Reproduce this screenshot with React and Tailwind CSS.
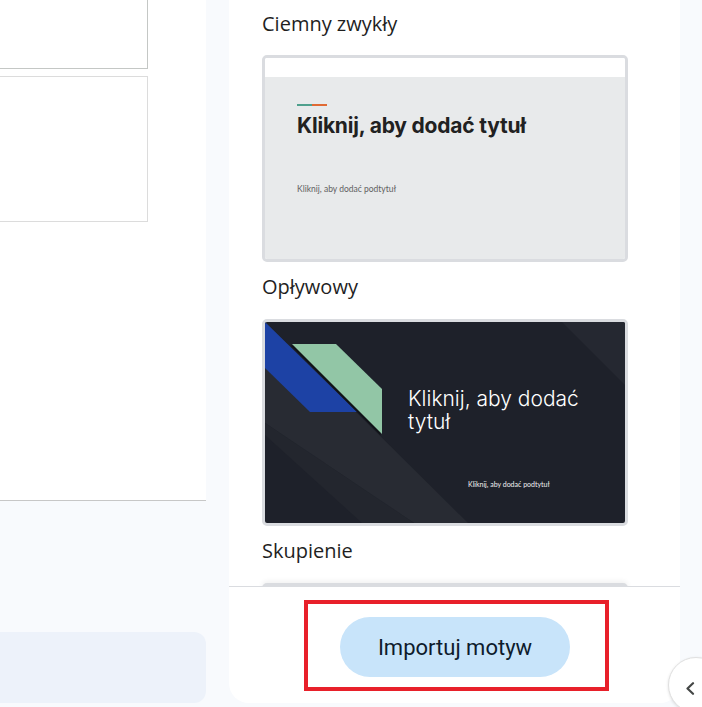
import React from "react";

function Label({ children }) {
  return (
    <div className="h-[24px] leading-[24px] text-[20px] text-[#1f1f1f] font-['Open_Sans',sans-serif] whitespace-nowrap">
      {children}
    </div>
  );
}

function CardLight() {
  return (
    <div className="w-[366px] h-[207px] rounded-[5px] border-[3px] border-[#dadce0] overflow-hidden flex flex-col">
      <div className="h-[19px] bg-white shrink-0" />
      <div className="flex-1 bg-[#e8eaeb] pl-[32px] pt-[27px] flex flex-col">
        <div className="flex h-[2px] w-[30px]">
          <div className="w-[15px] bg-[#4fa08d]" />
          <div className="w-[15px] bg-[#e06a34]" />
        </div>
        <div className="mt-[9px] text-[21px] leading-[22px] font-bold text-[#212121] font-['Inter',sans-serif] tracking-[-0.2px] whitespace-nowrap">
          Kliknij, aby dodać tytuł
        </div>
        <div className="mt-[48px] text-[8.5px] leading-[9px] text-[#616161] font-['Lato',sans-serif] whitespace-nowrap">
          Kliknij, aby dodać podtytuł
        </div>
      </div>
    </div>
  );
}

function CardDark() {
  return (
    <div className="w-[366px] h-[207px] rounded-[5px] border-[3px] border-[#dadce0] overflow-hidden">
      <div className="relative w-full h-full bg-[#1e212a]">
        <svg
          className="absolute inset-0 w-full h-full"
          viewBox="0 0 360 201"
          preserveAspectRatio="none"
        >
          <polygon points="297,0 361,0 361,64" fill="#252831" />
          <polygon points="0,0 203,201 149,201 0,101" fill="#282b33" />
          <polygon points="0,101 149,201 97,201 0,113" fill="#23262e" />
          <polygon points="0,0 92,90 45,90 0,46" fill="#1d42a5" />
          <polygon points="27,22 71,22 117,67 117,112" fill="#111318" transform="translate(-1.5,1.5)" />
          <polygon points="27,22 71,22 117,67 117,112" fill="#92c6a6" />
        </svg>
        <div className="relative flex flex-col">
          <div className="ml-[143px] mt-[66px] text-[21px] leading-[22.5px] font-light text-white font-['Inter',sans-serif]">
            Kliknij, aby dodać
            <br />
            tytuł
          </div>
          <div className="ml-[203px] mt-[47px] text-[7px] leading-[8px] text-[#f2f2f2] font-['Lato',sans-serif] whitespace-nowrap">
            Kliknij, aby dodać podtytuł
          </div>
        </div>
      </div>
    </div>
  );
}

function CardFocus() {
  return (
    <div className="w-[366px] h-[207px] rounded-[5px] border-[3px] border-[#dadce0] bg-white shadow-[0_-2px_5px_rgba(0,0,0,0.06)]" />
  );
}

export default function App() {
  return (
    <div className="relative w-[702px] h-[707px] overflow-hidden bg-[#f8fafd] flex font-['Open_Sans',sans-serif]">
      {/* left editor area */}
      <div className="w-[206px] shrink-0 flex flex-col">
        <div className="h-[501px] bg-white border-b border-[#c7c7c7] flex flex-col">
          <div className="w-[148px] h-[69px] border-r border-b border-[#c4c7c5] bg-white" />
          <div className="mt-[7px] w-[148px] h-[146px] border border-l-0 border-[#dcdcdc] bg-white" />
        </div>
        <div className="flex-1" />
        <div className="h-[71px] mb-[4px] bg-[#edf2fa] rounded-r-[12px]" />
      </div>

      {/* gap */}
      <div className="w-[23px] shrink-0" />

      {/* right theme panel */}
      <div className="w-[451px] h-[703px] shrink-0 bg-white rounded-b-[20px] flex flex-col overflow-hidden">
        <div className="flex-1 overflow-hidden pl-[33px] pt-[12px]">
          <div className="flex flex-col">
            <Label>Ciemny zwykły</Label>
            <div className="mt-[19px]">
              <CardLight />
            </div>
            <div className="mt-[13px]">
              <Label>Opływowy</Label>
            </div>
            <div className="mt-[20px]">
              <CardDark />
            </div>
            <div className="mt-[13px]">
              <Label>Skupienie</Label>
            </div>
            <div className="mt-[20px]">
              <CardFocus />
            </div>
          </div>
        </div>
        <div className="h-[117px] shrink-0 border-t border-[#dadce0] flex justify-center pt-[13px] pl-[4px]">
          <div className="w-[305px] h-[91px] border-[4px] border-[#e8202a] flex items-start pl-[32px] pt-[13px]">
            <button className="w-[230px] h-[60px] rounded-full bg-[#c8e4fa] text-[#0e1b2c] text-[22px] font-normal font-['Roboto',sans-serif]">
              Importuj motyw
            </button>
          </div>
        </div>
      </div>

      {/* collapse button */}
      <div className="absolute left-[668px] top-[657px] w-[56px] h-[56px] rounded-full bg-white border border-[#e0e0e0] shadow-[0_1px_3px_rgba(0,0,0,0.12)] flex items-start pl-[16px] pt-[24px]">
        <svg width="10" height="13" viewBox="0 0 10 13">
          <path d="M8 1.2 L2.5 6.5 L8 11.8" fill="none" stroke="#444746" strokeWidth="2.2" strokeLinecap="round" strokeLinejoin="round" />
        </svg>
      </div>
    </div>
  );
}
